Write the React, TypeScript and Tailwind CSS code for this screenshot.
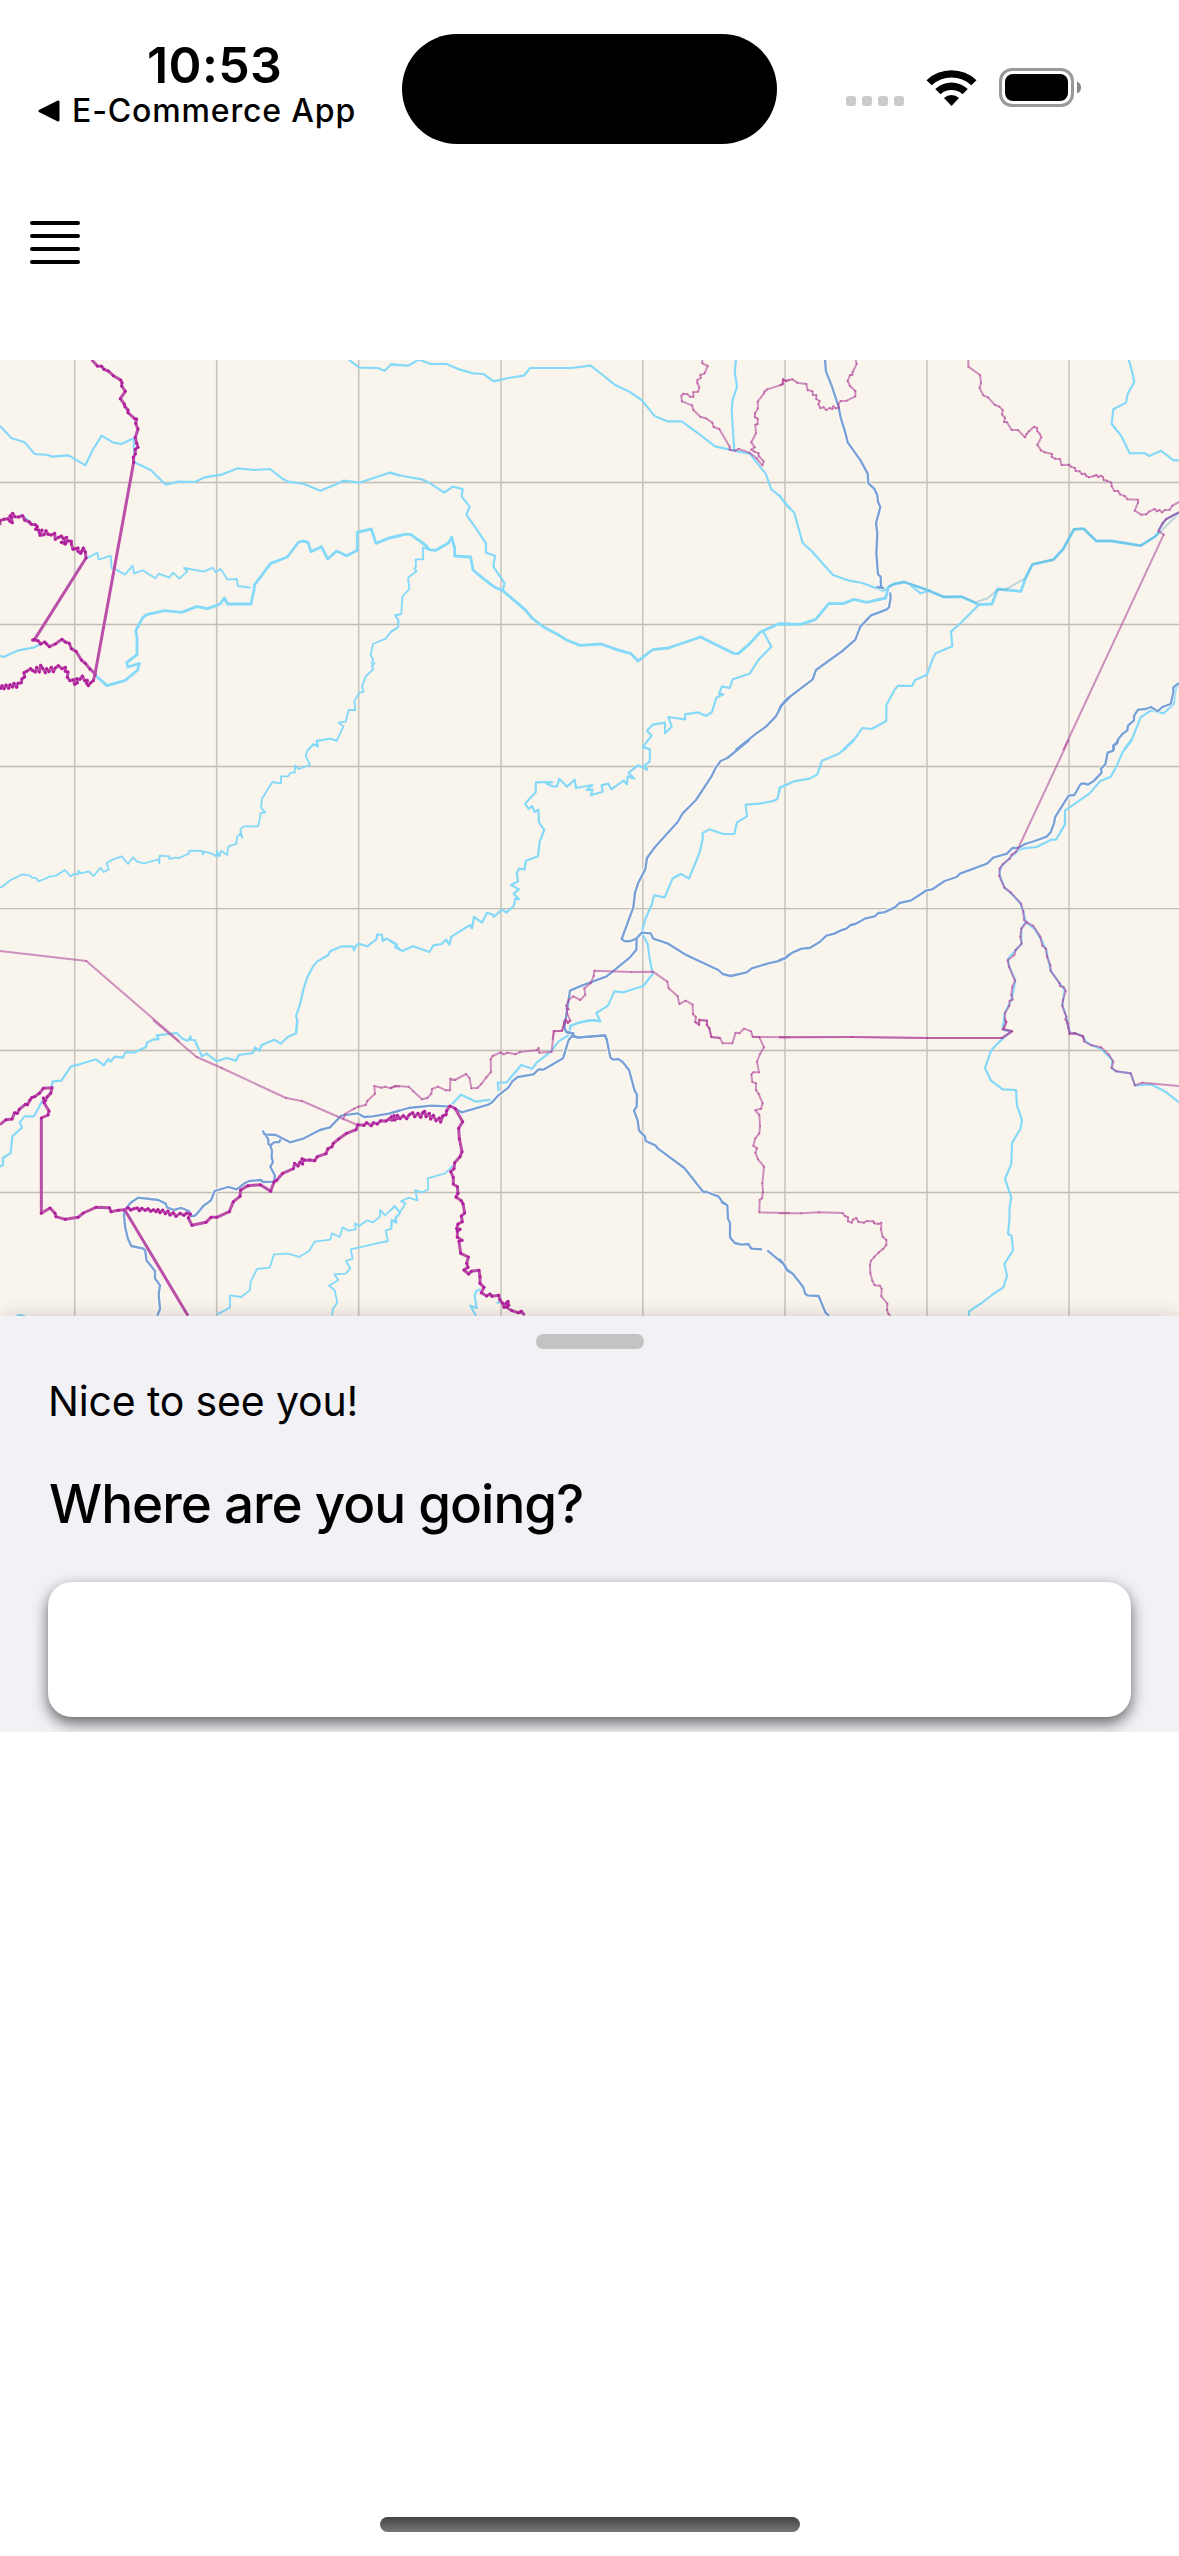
type Kind = 'stream' | 'river' | 'main' | 'pale' | 'road' | 'state' | 'country';

interface Tile {
  x: number;
  y: number;
  lines: [Kind, string][];
}

// Tile coordinates are stored at three units per pixel.
const tiles: Tile[] = [
  {
    x: 0,
    y: 350,
    lines: [
      ['river', '0,228 35,265 74,277 104,312 145,315 155,320 206,316 256,346 278,300 305,257 340,278 365,282 401,265 403,337 452,360 497,404 536,395 585,396 614,382 664,374 713,355 763,360 810,357 850,388 865,395 912,402 961,422 1008,403 1030,392 1078,398 1110,388 1168,368 1200,377'],
      ['river', '1046,29 1078,53 1133,54 1154,62 1174,43 1200,45'],
      ['stream', '260,625 292,608 296,629 332,617 335,655 343,656 375,674 398,647 402,670 428,661 466,685 476,671 508,683 519,668 538,686 562,664 552,654 612,665 638,653 647,667 662,657 683,689 711,687 713,708 752,713'],
      ['main', '285,975 321,1007 376,991 413,960 418,940 384,951 380,938 411,914 411,862 407,843 428,803 440,794 494,782 545,787 590,770 623,776 660,762 673,744 683,762 753,762 762,720 764,704 812,640 862,621 895,577 907,573 924,577 933,605 964,590 983,627 1010,603 1040,617 1072,601 1072,547 1114,537 1128,580 1165,565 1200,557'],
      ['river', '0,917 11,921 52,902 100,893 122,882'],
      ['river', '60,495 75,503 90,516'],
      ['stream', '1200,793 1185,796 1195,810 1195,832 1173,845 1157,866 1119,882 1112,916 1120,930 1115,938 1124,940 1115,947 1120,957 1097,980 1086,1010 1091,1026 1078,1028 1063,1053 1066,1080 1046,1080 1037,1115 1016,1118 1030,1130 1010,1172 991,1166 950,1172 954,1190 940,1183 923,1200'],
      ['country', '275,29 292,48 305,49 312,58 325,63 340,77 362,90 366,98 365,108 376,124 361,146 373,162 375,170 384,180 384,188 404,206 410,207 407,220 414,237 406,262 410,280 414,292 406,298 406,312 400,322 401,337 285,973 280,992 272,998 265,1007 260,1000 262,991 254,992 247,978 240,988 230,986 232,998 224,1003 220,989 210,992 202,982 204,966 196,964 196,952 186,956 175,947 166,954 160,965 154,952 147,965 140,956 136,968 128,955 122,946 118,966 110,952 106,966 98,962 92,956 80,964 72,968 74,981 66,986 64,998 54,1000 50,1012 42,1000 38,1011 30,1004 26,1015 18,1005 12,1016 6,1007 2,1015 0,1010'],
      ['country', '0,526 0,512 12,508 24,506 30,514 37,518 34,502 30,498 38,490 44,500 56,501 68,497 74,510 88,516 94,523 106,524 112,530 107,538 116,540 118,548 126,540 120,556 132,554 138,542 144,553 154,555 164,550 166,568 176,562 184,558 190,566 200,562 194,576 184,577 196,582 204,572 214,574 214,582 219,598 226,596 234,594 234,604 242,610 246,602 250,594 256,606 258,624 104,868 98,870 114,872 122,882 134,876 140,882 148,890 166,882 186,868 196,876 208,880 214,896 228,904 244,930 256,940 270,957 287,973'],
    ],
  },
  {
    x: 390,
    y: 350,
    lines: [
      ['river', '0,43 55,47 74,36 85,29 98,33 122,42 170,42 210,59 250,70 280,72 311,94 355,84 402,77 420,54 545,54 602,47 642,78 674,104 718,125 755,150 795,199 832,214 875,214 930,254 975,289 1033,302 1081,312 1110,350 1127,371 1144,418 1168,437 1200,478'],
      ['river', '1038,29 1034,65 1041,110 1028,150 1025,180 1033,302'],
      ['river', '0,368 38,378 96,388 120,400 163,428 188,410 218,417 215,440 239,470 229,494 256,532 288,580 288,608 315,617 310,650 344,700 338,722'],
      ['main', '0,564 45,553 62,553 106,585 118,599 138,601 176,578 185,562 194,594 194,618 242,621 249,660 280,686 313,711 338,722 380,757 408,782 426,804 462,832 502,853 530,870 570,886 634,882 680,899 723,911 744,933 788,899 835,894 932,861 1030,910 1045,911 1080,880 1110,847 1165,822 1200,822'],
      ['river', '1120,845 1144,890 1105,930 1079,971 1028,988 1019,1014 996,1009 987,1031 1000,1033 979,1043 966,1086 948,1098 923,1087 885,1093 886,1108 835,1101 845,1130 825,1150 825,1118 788,1124 771,1142 785,1157 758,1191 780,1198'],
      ['stream', '118,599 98,592 100,628 77,628 78,650 73,656 80,663 54,683 58,717 37,740 34,792 15,796 25,810 24,832 0,848'],
      ['road', '1200,1041 1175,1067 1157,1100 1128,1130 1098,1151 1037,1200'],
      ['state', '937,29 937,40 953,48 944,70 931,75 932,84 922,90 922,99 928,112 924,125 910,127 910,140 900,140 893,133 880,131 874,138 876,154 906,166 910,180 932,201 948,205 967,218 971,231 988,237 1019,290 1019,299 1037,302 1046,297 1078,308 1100,325 1117,346 1121,334 1106,318 1106,310 1093,305 1084,299 1094,292 1084,277 1098,250 1096,224 1103,222 1103,206 1095,202 1095,190 1104,175 1103,155 1122,130 1124,124 1132,118 1176,104 1180,89 1187,93 1200,88'],
    ],
  },
  {
    x: 779,
    y: 350,
    lines: [
      ['river', '0,434 16,456 46,489 71,579 100,605 135,645 162,675 207,691 250,699 312,722 325,716'],
      ['main', '0,822 65,823 110,808 150,760 192,761 225,748 263,757 320,744 328,711 345,702 375,696 440,718 495,741 548,740 600,764 639,762 656,717 726,724 738,688 760,644 823,629 852,598 885,538 914,536 952,573 998,573 1085,587 1128,560 1145,540'],
      ['pale', '328,711 345,702 375,696 440,718 495,741 548,740 590,757 627,744 656,719 680,719 738,685 760,642 823,629 852,598 885,538 914,536 952,573 998,573 1085,587 1128,560 1200,490'],
      ['river', '395,706 425,730 455,721'],
      ['river', '600,764 580,784 545,819 516,845 520,889 470,910 460,930 444,974 408,990 399,1008 357,1007 345,1022 322,1066 322,1113 278,1137 250,1134 230,1163 192,1200'],
      ['river', '1049,29 1059,63 1066,96 1046,132 1041,158 1003,178 998,222 1027,258 1052,310 1096,309 1111,318 1146,302 1184,331 1200,331'],
      ['river', '1200,1003 1190,1015 1184,1062 1154,1090 1116,1081 1085,1102 1060,1165 1035,1200'],
      ['road', '138,29 141,65 158,107 178,168 185,202 200,252 206,277 245,332 266,371 268,400 285,415 295,436 297,456 304,471 291,520 295,550 292,610 297,673 305,680 306,712'],
      ['road', '292,711 315,714'],
      ['road', '333,727 335,744 330,772 322,779 276,796 244,830 229,869 190,903 111,960 101,988 20,1050 4,1070 0,1080'],
      ['road', '1200,999 1183,1012 1183,1028 1175,1062 1150,1071 1136,1084 1116,1071 1100,1077 1077,1079 1065,1098 1065,1111 1047,1127 1045,1141 1030,1152 1018,1167 1015,1180 1003,1188 1005,1200'],
      ['road', '1200,487 1162,507 1151,520 1140,540'],
      ['state', '0,107 12,102 12,88 22,93 40,88 55,98 82,102 86,120 100,124 102,135 112,136 112,147 122,153 118,162 124,174 134,172 142,180 152,174 160,177 163,169 170,175 180,173 178,162 185,153 203,152 229,139 229,123 213,108 206,93 213,76 220,74 221,66 233,42 230,29'],
      ['state', '568,29 568,50 603,75 606,98 602,114 613,136 627,142 648,165 661,170 671,180 669,193 678,204 675,216 684,217 698,240 717,240 738,262 743,252 750,244 765,230 774,234 775,244 782,251 787,262 775,284 786,301 797,307 819,312 818,320 828,326 843,327 848,345 870,344 876,350 888,354 890,363 902,364 908,372 918,371 922,378 930,382 945,378 952,375 958,381 966,377 972,382 974,390 984,392 997,398 998,409 1006,423 1017,423 1023,433 1037,438 1046,448 1077,449 1077,458 1067,482 1087,494 1102,493 1110,485 1127,477 1134,484 1141,480 1149,487 1158,480 1172,479 1180,467 1200,456'],
      ['state', '1200,487 1162,507 1151,520 1138,543 1154,554 853,1200'],
    ],
  },
  {
    x: 0,
    y: 740,
    lines: [
      ['stream', '0,443 8,439 32,420 67,403 88,406 97,413 108,414 115,424 134,417 148,410 168,407 195,390 212,409 222,402 235,402 235,392 243,400 266,394 281,408 302,383 311,396 326,388 320,369 338,359 365,349 384,372 399,352 410,364 432,370 475,358 478,370 479,347 508,349 508,357 526,353 538,354 567,340 568,332 607,333 609,344 614,335 634,340 650,349 651,333 658,349 664,332 681,345 685,320 709,311 712,290 721,280 727,294 721,268 732,259 775,259 782,219 796,218 783,203 786,176 817,126 843,130 843,109 864,109 872,98 884,98 885,76 896,87 930,75 917,48 921,35 940,12 954,19 949,4 990,-4 1012,3'],
      ['river', '1200,628 1189,620 1189,612 1160,596 1148,603 1146,584 1131,584 1130,597 1102,619 1076,611 1068,618 1062,631 1059,619 1026,619 990,634 985,645 952,664 940,678 922,712 911,745 901,790 888,828 892,841 888,880'],
      ['state', '0,633 259,663 538,904'],
    ],
  },
  {
    x: 390,
    y: 740,
    lines: [
      ['river', '758,20 780,28 779,65 764,76 772,89 744,76 716,98 733,116 713,109 711,133 701,122 664,148 655,131 635,136 638,155 603,166 607,149 590,150 607,135 558,144 554,119 531,140 508,116 501,139 486,139 470,131 487,126 438,127 437,157 405,191 416,207 426,198 434,216 445,209 447,247 463,270 449,305 444,349 407,363 404,388 387,386 380,400 384,424 363,435 387,448 371,461 387,478 376,476 371,498 349,518 337,508 311,531 310,524 291,518 276,548 252,531 246,565 240,555 184,590 178,614 168,599 155,612 130,616 118,636 69,619 37,633 16,622 20,615 0,602'],
      ['river', '1200,130 1170,143 1162,177 1150,183 1108,191 1067,194 1071,229 1041,247 1033,282 1000,282 958,268 938,279 938,298 928,340 897,416 873,402 848,415 824,472 792,466 785,495 766,537 755,578 773,612 779,655 788,702 760,738 701,757 673,754 654,797 619,819 631,844 613,840 570,847 542,857 536,885'],
      ['road', '1078,0 1012,54 992,63 978,82 964,110 918,180 878,220 863,246 795,321 771,354 766,387 745,428 735,458 730,502 695,597 705,604 722,603 740,595 755,578 782,580 790,596 832,610 885,643 985,690 998,702 1022,708 1070,697 1085,685 1135,670 1162,664 1185,655 1200,642'],
      ['road', '740,595 739,629 720,652 650,709 575,737 540,752 523,864 530,876 550,880 548,886 564,893 645,886 651,900'],
      ['state', '488,900 492,874 516,872 524,850 527,838 533,848 541,842 532,822 530,806 536,808 528,798 536,780 550,769 571,780 586,764 583,745 602,730 611,708 613,692 725,696 789,695 832,725 836,745 863,769 868,792 887,782 908,794 909,822 918,832 915,846 927,854 928,839 951,842 950,855 958,865 964,891 990,894'],
    ],
  },
  {
    x: 779,
    y: 740,
    lines: [
      ['river', '0,160 2,143 45,124 92,116 115,103 129,62 178,42 200,25 226,0'],
      ['river', '1059,0 1031,36 1012,80 995,110 963,124 932,160 858,212 858,253 831,299 817,299 773,321 735,325 720,330 696,350 668,378 662,393 663,408 677,443 696,460 724,490 733,515 740,545 727,568 727,611 687,657 691,680 709,722 697,780 677,820 671,867 680,872 697,873 667,900'],
      ['river', '740,545 768,568 790,605 802,632 815,692 842,730 857,750 850,795 862,830 872,878 888,880 912,889 916,900'],
      ['road', '0,660 16,655 40,638 68,626 92,624 122,606 142,587 166,581 184,572 202,566 215,555 229,552 257,536 287,529 298,519 315,517 348,502 361,489 397,481 443,451 460,448 497,423 533,411 543,401 624,371 643,353 684,341 700,324 718,324 738,312 767,303 803,290 815,277 825,250 828,232 848,200 869,167 886,165 905,132 916,130 926,134 943,124 968,98 966,86 979,73 986,38 1003,32 1003,16 1013,8 1016,0'],
      ['state', '869,0 718,324 709,337 698,344 692,356 672,372 662,386 661,408 676,443 695,457 726,491 733,515 735,540 743,547 727,565 724,590 728,611 710,630 706,645 686,661 690,680 708,722 700,740 697,765 701,779 692,782 691,797 678,819 678,838 682,846 676,860 671,868 698,874 667,894 444,894 220,891 0,892'],
      ['state', '743,547 763,558 784,590 790,617 801,626 804,650 814,675 815,693 842,730 843,738 854,741 860,753 852,780 850,798 857,818 862,830 859,838 866,848 872,881 888,880 912,889 916,900'],
    ],
  },
  {
    x: 0,
    y: 1020,
    lines: [
      ['river', '154,202 158,184 184,182 213,139 239,133 288,118 311,136 325,117 332,125 344,110 369,113 376,97 405,97 438,81 441,68 461,58 476,58 470,46 530,39 546,55 563,63 572,49 572,60 584,60 606,109 620,101 650,124 680,114 708,122 716,105 759,99 765,82 778,93 785,75 823,59 842,71 863,51 888,40 892,0'],
      ['river', '127,242 102,289 74,289 59,307 66,323 37,349 32,399 9,414 9,435 0,440'],
      ['river', '50,887 62,885 75,888'],
      ['stream', '1200,578 1185,559 1155,586 1140,570 1140,590 1119,607 1102,601 1077,618 1065,610 1067,628 1045,632 1028,622 1019,651 996,640 991,659 944,665 927,693 897,711 865,701 822,703 809,743 771,747 752,785 750,811 723,831 690,826 690,863 650,884'],
      ['stream', '1200,580 1186,593 1190,608 1175,600 1174,626 1157,632 1164,663 1130,670 1052,688 1058,716 1038,723 1051,745 1037,761 1003,763 1015,780 987,797 1004,811 1012,848 999,866 996,887'],
      ['road', '1200,271 1170,280 1118,289 1092,291 1073,280 1024,287 990,322 960,330 912,355 870,367 828,345 793,343 789,334 805,358 805,372 812,376 822,367 838,366 842,358'],
      ['road', '810,376 816,392 815,412 819,426 811,440 825,467 822,485 790,486 782,480 748,483 735,489 710,508 684,501 644,513 633,541 610,558 587,586 575,589 567,573 544,564 522,570 501,562 497,551 475,540 414,533 392,548 374,570 372,588 376,625 384,657 394,678 430,686 436,692 439,720 465,753 465,775 480,796 476,822 480,867 472,887'],
      ['state', '459,0 590,111 665,144 858,234 906,243 1030,297 1073,315'],
      ['state', '1030,297 1035,282 1062,266 1075,260 1097,255 1102,243 1125,221 1123,198 1144,203 1156,200 1172,205 1184,199 1200,199'],
      ['country', '0,314 18,299 36,297 44,278 52,280 58,268 76,253 82,254 90,240 96,232 104,230 118,220 130,205 156,203 152,220 142,230 136,242 130,234 132,248 147,273 144,285 124,294 124,580 150,564 165,580 168,590 196,598 234,592 250,579 288,562 328,563 333,575 355,571 374,569 564,887'],
      ['country', '374,569 384,563 392,570 402,566 412,564 418,572 425,565 436,571 444,566 452,574 460,569 468,575 474,569 480,578 488,570 496,581 504,573 510,585 520,578 528,589 540,580 552,586 560,579 571,582 565,594 576,616 618,607 633,592 650,592 688,575 700,545 720,529 722,510 744,497 781,494 812,514 822,486 830,481 848,460 880,446 884,430 894,438 900,426 908,432 906,416 914,421 930,420 944,422 952,410 978,401 984,386 996,380 1000,370 1016,357 1040,340 1068,329 1074,314 1092,316 1100,308 1114,317 1120,308 1132,312 1142,302 1158,303 1168,296 1176,300 1182,287 1190,296 1200,291'],
    ],
  },
  {
    x: 390,
    y: 1020,
    lines: [
      ['river', '632,4 600,0 570,7 542,17 536,45 506,64 483,94 440,128 427,146 394,135 350,187 323,188 326,213'],
      ['river', '302,239 258,245 213,224 186,253'],
      ['stream', '190,436 165,460 113,475 115,508 96,517 76,510 82,541 56,533 33,544 46,550 30,578 14,600 18,608 5,600 4,625 0,628'],
      ['stream', '0,572 13,558 30,578'],
      ['river', '272,808 258,814 254,828 260,864 241,857 258,887'],
      ['river', '320,850 332,845'],
      ['road', '522,0 523,25 530,37 550,41 546,48 564,52 645,46 651,62 661,112 669,119 685,117 698,126 717,150 734,212 741,224 740,260 732,272 743,302 747,331 765,350 767,363 796,376 803,385 883,444 940,516 950,516 986,530 1000,550 1012,556 1014,597 1020,608 1020,652 1034,669 1055,674 1075,672 1084,686 1116,688'],
      ['road', '1132,691 1182,733 1190,750 1200,757'],
      ['road', '546,48 536,60 519,115 460,149 446,148 430,163 383,171 367,184 355,203 325,226 308,245 295,254 215,277 186,260 124,257 55,264 0,280'],
      ['road', '993,545 1008,552'],
      ['state', '0,204 18,198 56,200 70,214 96,238 112,234 124,221 126,207 144,200 168,211 180,211 181,176 195,180 228,162 239,175 244,205 262,204 274,192 289,172 303,156 302,118 308,108 332,97 341,103 352,98 376,103 390,96 440,91 446,84 448,98 485,95 491,34 516,32 522,10 527,0 534,8 541,0'],
      ['state', '915,4 927,14 928,0 951,2 951,14 958,25 964,51 990,54 998,70 1027,70 1037,38 1048,40 1062,26 1083,34 1088,50 1108,52 1122,82 1110,102 1101,125 1107,157 1090,157 1084,164 1087,186 1098,190 1098,210 1106,222 1118,250 1113,266 1096,271 1108,285 1110,318 1108,340 1096,355 1090,377 1101,385 1096,398 1104,418 1122,440 1117,490 1119,516 1116,535 1109,540 1108,577 1200,579'],
      ['state', '1088,51 1200,52'],
      ['country', '0,303 4,290 14,300 22,286 30,296 40,287 50,296 58,284 68,278 74,290 84,280 92,292 98,278 104,274 108,290 118,280 122,297 130,286 138,302 148,294 152,306 158,288 168,284 170,272 180,258 196,266 218,305 206,325 208,356 216,395 210,410 194,428 192,446 182,455 190,472 190,492 202,500 204,520 198,531 214,542 219,551 224,579 214,588 217,605 204,612 200,626 210,628 202,634 202,652 216,661 207,664 212,700 235,711 230,730 234,742 222,750 236,762 244,754 267,751 270,770 270,790 282,802 274,818 290,828 300,822 306,829 326,826 330,840 338,850 342,862 348,850 354,844 356,856 350,862 366,872 384,878 394,874 404,886'],
    ],
  },
  {
    x: 779,
    y: 1020,
    lines: [
      ['river', '678,0 671,27 697,33 672,55 642,85 634,98 618,144 636,182 671,208 711,210 714,257 729,300 724,327 699,369 697,432 678,477 697,533 692,560 691,605 687,642 698,648 702,691 676,732 684,768 673,802 643,822 608,849 570,874 570,888'],
      ['river', '863,0 872,38 888,40 912,49 922,66 938,76 966,86 1000,120 998,144 1012,154 1055,160 1068,196 1116,193 1162,217 1200,247'],
      ['road', '0,716 17,735 22,747 42,762 73,802 79,822 85,826 119,828 139,877 150,888'],
      ['state', '0,52 220,51 444,54 670,54 700,34 674,28 682,6 678,0'],
      ['state', '863,0 872,41 888,40 912,49 915,64 938,76 966,82 990,104 1003,125 998,144 1012,154 1055,160 1068,196 1090,188 1200,198'],
      ['state', '0,580 66,580 120,577 191,579 198,588 207,592 207,604 218,608 222,599 232,594 238,605 255,608 264,603 283,604 286,610 298,612 307,608 306,628 311,650 322,660 322,675 312,687 300,697 285,712 276,722 273,735 274,760 280,782 287,796 303,797 308,806 307,829 325,851 324,870 328,882 336,888'],
    ],
  },
];

const style: Record<Kind, { stroke: string; width: number; marker?: string }> = {
  stream: { stroke: '#84d9f9', width: 5.5 },
  river: { stroke: '#84d9f9', width: 6.5 },
  main: { stroke: '#84d9f9', width: 8.5 },
  pale: { stroke: '#4aa0c4', width: 6 },
  road: { stroke: '#7aa1d6', width: 7 },
  state: { stroke: '#b0479a', width: 6, marker: 'url(#state-node)' },
  country: { stroke: '#b94fa8', width: 9, marker: 'url(#country-node)' },
};

const layers: Kind[] = ['stream', 'river', 'main', 'pale', 'road', 'state', 'country'];

const gridX = [74.7, 216.7, 358.7, 501, 642.8, 785, 927, 1069];
const gridY = [482.5, 624.5, 766.5, 908.6, 1050.5, 1192.5];

function Layer({ kind, halo }: { kind: Kind; halo?: boolean }) {
  const s = style[kind];
  const opacity = kind === 'pale' ? 0.35 : kind === 'state' ? 0.58 : 1;
  return (
    <g
      fill="none"
      stroke={halo ? '#ffffff' : s.stroke}
      strokeWidth={halo ? s.width + 6 : s.width}
      strokeLinejoin="round"
      strokeOpacity={halo ? 0.7 : opacity}
    >
      {tiles.map((t) => (
        <g key={`${t.x}-${t.y}`} transform={`translate(${t.x} ${t.y}) scale(0.33333)`}>
          {t.lines
            .filter(([k]) => k === kind)
            .map(([, points]) => (
              <polyline key={points} points={points} markerMid={halo ? undefined : s.marker} />
            ))}
        </g>
      ))}
    </g>
  );
}

function MapView() {
  return (
    <svg className="block h-[956px] w-full shrink-0 bg-[#f9f4ec]" viewBox="0 360 1179 956" aria-label="Map">
      <defs>
        <marker id="state-node" markerUnits="userSpaceOnUse" markerWidth="8" markerHeight="8" refX="4" refY="4">
          <circle cx="4" cy="4" r="3" fill="#b0359a" fillOpacity="0.55" />
        </marker>
        <marker id="country-node" markerUnits="userSpaceOnUse" markerWidth="12" markerHeight="12" refX="6" refY="6">
          <circle cx="6" cy="6" r="4.6" fill="#ad0b99" fillOpacity="0.75" />
        </marker>
      </defs>
      <g stroke="#bfbdb6">
        {gridY.map((y) => (
          <path key={y} d={`M0 ${y}H1179`} strokeWidth="1.4" />
        ))}
        {gridX.map((x) => (
          <path key={x} d={`M${x} 360V1316`} strokeWidth="1.6" strokeOpacity="0.85" />
        ))}
      </g>
      {layers.map((kind) => (
        <g key={kind}>
          {kind === 'road' && <Layer kind="road" halo />}
          <Layer kind={kind} />
        </g>
      ))}
    </svg>
  );
}

function StatusBar() {
  return (
    <header className="flex h-[177px] shrink-0 items-start">
      <div className="flex w-[402px] flex-col">
        <div className="mt-[35px] ml-[147px] h-[60px] text-[50px] leading-[60px] font-semibold tracking-[0.4px] whitespace-nowrap">10:53</div>
        <div className="-mt-[4px] ml-[38px] flex h-[40px] items-center text-[32px] leading-[40px] font-medium whitespace-nowrap">
          <svg className="mr-[12px] h-[22px] w-[22px]" viewBox="0 0 22 22">
            <path d="M2 11 20 2V20Z" stroke="#000" strokeWidth="3" strokeLinejoin="round" />
          </svg>
          <span className="tracking-[0.84px]">E-Commerce App</span>
        </div>
      </div>
      <div className="mt-[34px] h-[110px] w-[375px] rounded-full bg-black" />
      <div className="mt-[68px] ml-[69px] flex h-[39px]">
        <div className="mt-[28px] flex gap-[6px]">
          {[0, 1, 2, 3].map((i) => (
            <span key={i} className="h-[10px] w-[10px] rounded-[3px] bg-[#cbcbcb]" />
          ))}
        </div>
        <svg className="mt-px ml-[22px] h-[38px] w-[51px]" viewBox="0 0 51 38">
          <path d="M.5 11.2A36.500 36.500 0 0 1 50.500 11.200L45.300 16.300A29.200 29.200 0 0 0 5.700 16.300Z" />
          <path d="M9.200 20A24 24 0 0 1 41.800 20L36.500 25.200A16.600 16.600 0 0 0 14.500 25.200Z" />
          <path d="M18 28.900A11.500 11.500 0 0 1 33 28.900L25.500 37Z" />
        </svg>
        <svg className="ml-[22px] h-[39px] w-[83px]" viewBox="0 0 83 39">
          <rect x="1.500" y="1.500" width="72" height="36" rx="11.500" fill="none" stroke="#999" strokeWidth="3" />
          <rect x="6" y="6" width="63" height="27" rx="8" />
          <path d="M78 13.500A6.500 6.500 0 0 1 78 25.500Z" fill="#868686" />
        </svg>
      </div>
    </header>
  );
}

export default function App() {
  return (
    <div className="flex h-[2556px] w-[1179px] flex-col overflow-hidden bg-white font-['Inter',sans-serif] text-black">
      <StatusBar />
      <nav className="flex h-[183px] shrink-0 items-start pt-[44px] pl-[30px]">
        <button className="flex w-[50px] flex-col gap-[9px]" aria-label="Menu">
          {[0, 1, 2, 3].map((i) => (
            <span key={i} className="h-[4px] w-full rounded-full bg-black" />
          ))}
        </button>
      </nav>
      <MapView />
      <section className="relative h-[416px] shrink-0 shadow-[0_0_18px_rgba(0,0,0,0.16)] [clip-path:inset(-30px_0_0_0)]">
        <div className="flex h-full flex-col overflow-hidden bg-[#f2f1f6] px-[48px]">
          <div className="mt-[18px] h-[15px] w-[108px] shrink-0 self-center rounded-[7px] bg-[#c2c4c3]" />
          <p className="mt-[27px] text-[41px] leading-[50px] tracking-[-0.15px] whitespace-nowrap">Nice to see you!</p>
          <h1 className="mt-[46px] ml-px text-[53px] leading-[64px] font-medium tracking-[-1px] whitespace-nowrap">Where are you going?</h1>
          <div className="mt-[46px] h-[135px] shrink-0 rounded-[24px] bg-white shadow-[0_6px_15px_rgba(0,0,0,0.6)]" />
        </div>
      </section>
      <div className="mt-auto mb-[24px] h-[15px] w-[420px] shrink-0 self-center rounded-full bg-gradient-to-b from-[#444] to-[#777]" />
    </div>
  );
}
